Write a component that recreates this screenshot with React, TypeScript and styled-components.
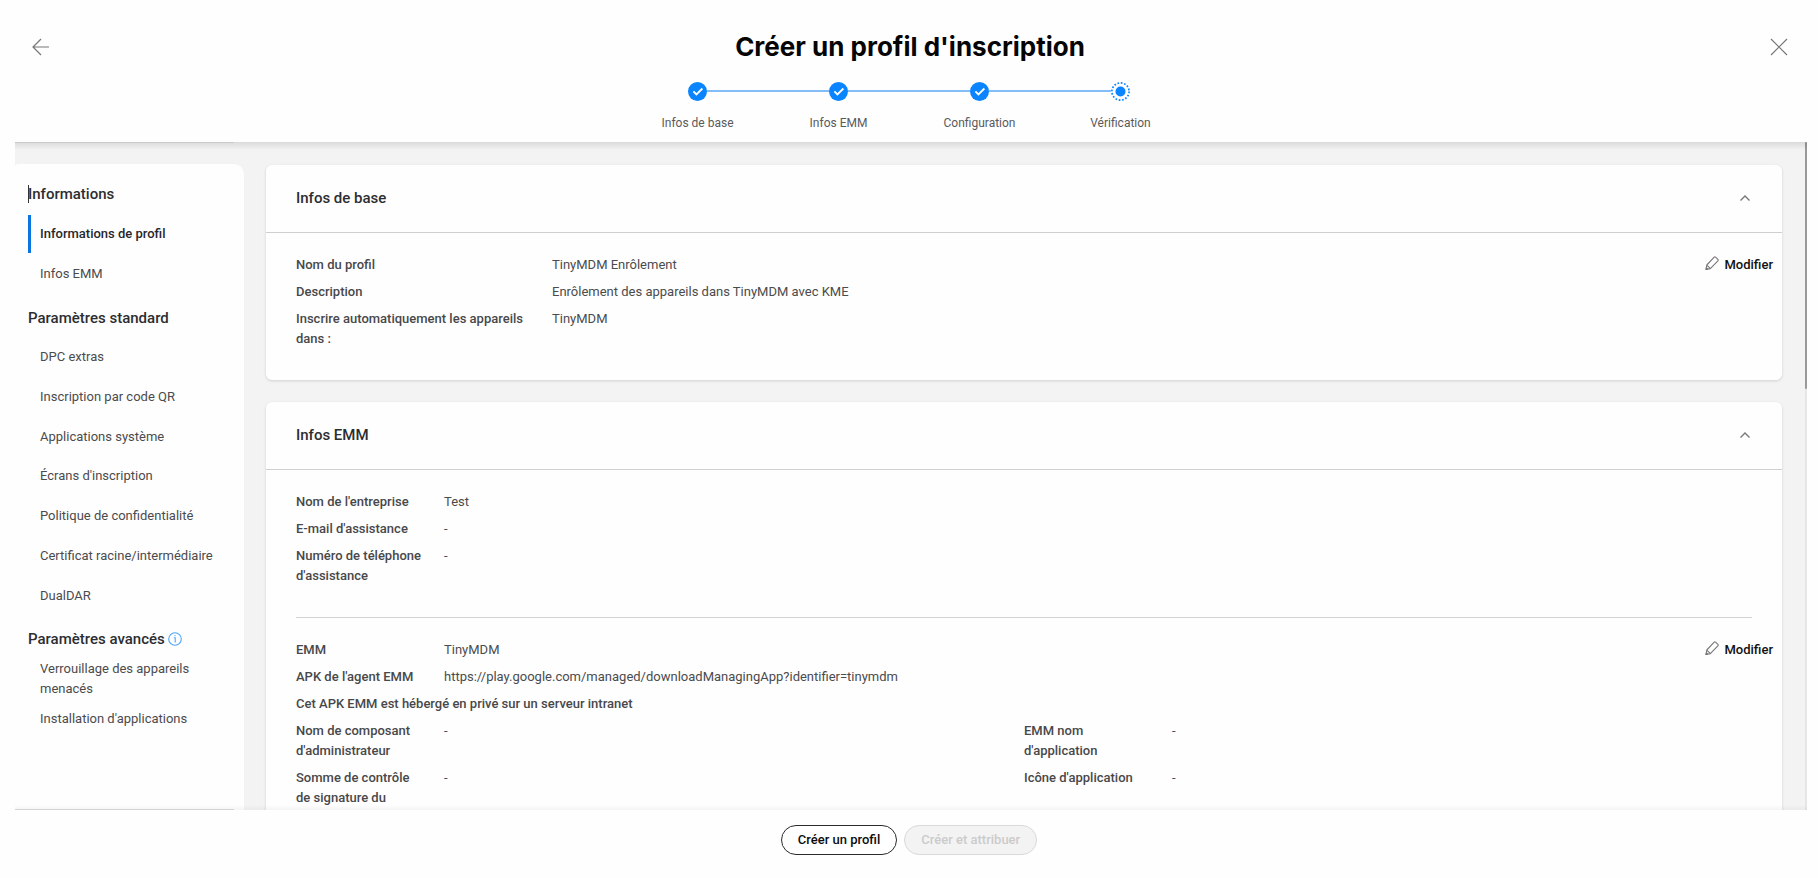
import React from 'react';
import styled, { createGlobalStyle, css } from 'styled-components';

const GlobalStyle = createGlobalStyle`
  * { box-sizing: border-box; }
  body {
    margin: 0;
    background: #fefefe;
    color: #4b4b4d;
    font-family: Roboto, "Liberation Sans", sans-serif;
    font-size: 13px;
    line-height: 20px;
  }
  h1, h2, h3, ol, ul, dl, dd, p { margin: 0; padding: 0; }
  ol, ul { list-style: none; }
  button { font: inherit; cursor: pointer; }
  a { color: inherit; text-decoration: none; }
`;

const Page = styled.div`
  display: flex;
  flex-direction: column;
  height: 100vh;
`;

const Header = styled.header`
  flex: none;
  height: 142px;
  padding: 27px 30px 0;
`;

const TitleRow = styled.div`
  display: flex;
  align-items: center;
  justify-content: space-between;
  height: 40px;
`;

const Title = styled.h1`
  color: #050505;
  font-family: Inter, "Liberation Sans", sans-serif;
  font-size: 26px;
  font-weight: 700;
  line-height: 40px;
`;

const IconButton = styled.button`
  display: flex;
  padding: 0;
  border: 0;
  background: none;
  color: #777;
`;

const Steps = styled.ol`
  display: flex;
  justify-content: center;
  margin-top: 15px;
`;

const StepItem = styled.li`
  position: relative;
  display: flex;
  flex-direction: column;
  align-items: center;
  gap: 12px;
  width: 141px;
  font-size: 12px;
  color: #5a5a5c;

  & + &::before {
    content: '';
    position: absolute;
    top: 8px;
    left: -61px;
    width: 122px;
    height: 2px;
    background: #82bdf8;
  }
`;

const Content = styled.main`
  position: relative;
  display: flex;
  flex: 1;
  min-height: 0;
  margin: 0 11px 0 15px;
  background: #f3f3f3;

  &::before,
  &::after {
    content: '';
    position: absolute;
    left: 0;
    right: 0;
    pointer-events: none;
  }
  &::before {
    top: 0;
    height: 8px;
    background: linear-gradient(rgba(0, 0, 0, 0.1), rgba(0, 0, 0, 0));
  }
  &::after {
    bottom: 0;
    height: 5px;
    background: linear-gradient(rgba(0, 0, 0, 0), rgba(0, 0, 0, 0.04));
  }
`;

const SideColumn = styled.div`
  position: relative;
  flex: none;
  display: flex;
  width: 229px;
  padding-top: 22px;

  &::before,
  &::after {
    content: '';
    position: absolute;
    left: 0;
    width: 219px;
    height: 1px;
  }
  &::before { top: 0; background: #c9c9c9; }
  &::after { bottom: 0; background: #dcdcdc; }
`;

const SideNav = styled.nav`
  flex: 1;
  padding: 6px 13px 0;
  border-radius: 4px 10px 0 0;
  background: #fefefe;
`;

const NavHeading = styled.h2<{ $caret?: boolean }>`
  position: relative;
  display: flex;
  align-items: center;
  gap: 3px;
  padding: 14px 0 10px;
  color: #2c2d31;
  font-size: 15px;
  font-weight: 500;
  line-height: 20px;

  ${(p) => p.$caret && css`
    &::before {
      content: '';
      position: absolute;
      top: 15px;
      left: 0;
      width: 1px;
      height: 18px;
      background: #333;
    }
  `}
`;

const NavList = styled.div`
  display: flex;
  flex-direction: column;
  justify-content: space-between;
  min-height: 277px;
`;

const NavLink = styled.a<{ $active?: boolean; $compact?: boolean; $dense?: boolean }>`
  display: block;
  padding: ${(p) => (p.$compact ? '0 12px 10px' : p.$dense ? '9px 0 9px 12px' : '10px 0 10px 12px')};
  font-size: 13px;

  ${(p) => p.$active && css`
    margin: 1px 0;
    padding: 9px 0 9px 9px;
    border-left: 3px solid #0a74e0;
    color: #27282c;
    font-weight: 500;
  `}
`;

const Panels = styled.div`
  display: flex;
  flex: 1;
  flex-direction: column;
  gap: 22px;
  overflow-y: auto;
  scrollbar-width: none;
  padding: 23px 23px 0 22px;
`;

const ScrollTrack = styled.div`
  flex: none;
  width: 2px;
  background: #e6e6e6;
`;

const ScrollThumb = styled.div`
  height: 37%;
  border-radius: 1px;
  background: #999;
`;

const Card = styled.section`
  flex: none;
  border-radius: 6px;
  background: #fefefe;
  box-shadow: 0 1px 3px rgba(0, 0, 0, 0.14);
`;

const CardHead = styled.div`
  display: flex;
  align-items: center;
  justify-content: space-between;
  padding: 23px 31px 24px 30px;
  border-bottom: 1px solid #cfcfcf;
`;

const CardTitle = styled.h2`
  color: #2c2d31;
  font-size: 15px;
  font-weight: 500;
  line-height: 20px;
`;

const Block = styled.div`
  margin: 0 30px;
  padding: 22px 0 31px;

  & + & { border-top: 1px solid #d3d3d3; }
`;

const BlockRow = styled.div`
  display: flex;
  align-items: flex-start;
  justify-content: space-between;
`;

const Fields = styled.dl<{ $columns?: number }>`
  display: grid;
  flex: 1;
  grid-template-columns: repeat(${(p) => p.$columns ?? 1}, 1fr);
  row-gap: 7px;
`;

const Field = styled.div<{ $label: number }>`
  display: grid;
  grid-template-columns: ${(p) => p.$label}px 1fr;
  column-gap: 20px;

  dt { color: #48484a; font-weight: 500; }
`;

const Note = styled.p`
  margin: 7px 0;
  color: #48484a;
  font-weight: 500;
`;

const EditButton = styled.button`
  display: flex;
  gap: 5px;
  margin-right: -21px;
  padding: 0;
  border: 0;
  background: none;
  color: #111;
  font-weight: 500;
`;

const Footer = styled.footer`
  display: flex;
  flex: none;
  justify-content: center;
  gap: 7px;
  height: 68px;
  padding-top: 15px;
`;

const PillButton = styled.button`
  height: 30px;
  padding: 0 16px;
  border: 1px solid #2a2a2a;
  border-radius: 15px;
  background: #fff;
  color: #0c0c0c;
  font-weight: 500;

  &:disabled {
    border-color: #d9d9d9;
    background: #f3f3f3;
    color: #cbcbcb;
    cursor: default;
  }
`;

const BackIcon = () => (
  <svg width="20" height="20" viewBox="0 0 20 20" fill="none" stroke="currentColor" strokeWidth="1.2">
    <path d="M19 10H3M11 2L3 10L11 18" />
  </svg>
);

const CloseIcon = () => (
  <svg width="18" height="18" viewBox="0 0 18 18" fill="none" stroke="currentColor" strokeWidth="1.2">
    <path d="M1 1L17 17M17 1L1 17" />
  </svg>
);

const ChevronIcon = () => (
  <svg width="12" height="12" viewBox="0 0 12 12" fill="none" stroke="currentColor" strokeWidth="1.4">
    <path d="M1.5 8.5L6 4L10.5 8.5" />
  </svg>
);

const PencilIcon = () => (
  <svg width="14" height="16" viewBox="0 0 14 16" fill="none" stroke="#777" strokeWidth="1.1" strokeLinejoin="round">
    <path d="M1 14.5L1.8 10L9.2 2.2Q9.9 1.5 10.6 2.2L12.9 4.4Q13.6 5.1 12.9 5.8L5.3 13.6Z" />
    <path d="M2 10.4L5 13.2M1 14.5L2.6 13.9L1.5 12.8Z" />
  </svg>
);

const InfoIcon = () => (
  <svg width="14" height="14" viewBox="0 0 14 14" fill="none" stroke="#4fa6fb" strokeWidth="1.1">
    <circle cx="7" cy="7" r="6.3" />
    <path d="M5.8 5.8H7.2V10.5M7 3.2V4.3" />
  </svg>
);

const StepIcon = ({ done }: { done: boolean }) => (
  <svg width="19" height="19" viewBox="0 0 19 19" fill="none">
    {done ? (
      <>
        <circle cx="9.5" cy="9.5" r="9.5" fill="#0a84ff" />
        <path d="M5.4 9.4L8.4 12.4L14.4 6.5" stroke="#fff" strokeWidth="1.8" />
      </>
    ) : (
      <>
        <circle cx="9.5" cy="9.5" r="9.5" fill="#fefefe" />
        <circle cx="9.5" cy="9.5" r="8.6" stroke="#0a84ff" strokeWidth="1.7" strokeDasharray="1.7 1.68" />
        <circle cx="9.5" cy="9.5" r="5" fill="#0a84ff" />
      </>
    )}
  </svg>
);

const StepMark = styled.span`
  position: relative;
  z-index: 1;
  display: flex;
`;

const steps = ['Infos de base', 'Infos EMM', 'Configuration', 'Vérification'];
const standard = [
  'DPC extras',
  'Inscription par code QR',
  'Applications système',
  "Écrans d'inscription",
  'Politique de confidentialité',
  'Certificat racine/intermédiaire',
  'DualDAR',
];
const advanced = ['Verrouillage des appareils menacés', "Installation d'applications"];

type Pair = [string, string];
const basics: Pair[] = [
  ['Nom du profil', 'TinyMDM Enrôlement'],
  ['Description', 'Enrôlement des appareils dans TinyMDM avec KME'],
  ['Inscrire automatiquement les appareils dans :', 'TinyMDM'],
];
const company: Pair[] = [
  ["Nom de l'entreprise", 'Test'],
  ["E-mail d'assistance", '-'],
  ["Numéro de téléphone d'assistance", '-'],
];
const emm: Pair[] = [
  ['EMM', 'TinyMDM'],
  ["APK de l'agent EMM", 'https://play.google.com/managed/downloadManagingApp?identifier=tinymdm'],
];
const emmDetails: Pair[] = [
  ["Nom de composant d'administrateur", '-'],
  ["EMM nom d'application", '-'],
  ['Somme de contrôle de signature du', '-'],
  ["Icône d'application", '-'],
];

const FieldList = ({ items, label, columns }: { items: Pair[]; label: number; columns?: number }) => (
  <Fields $columns={columns}>
    {items.map(([name, value]) => (
      <Field key={name} $label={label}>
        <dt>{name}</dt>
        <dd>{value}</dd>
      </Field>
    ))}
  </Fields>
);

const Edit = () => (
  <EditButton type="button">
    <PencilIcon />
    Modifier
  </EditButton>
);

const PanelHead = ({ title }: { title: string }) => (
  <CardHead>
    <CardTitle>{title}</CardTitle>
    <IconButton type="button" aria-label="Réduire"><ChevronIcon /></IconButton>
  </CardHead>
);

export default function App() {
  return (
    <Page>
      <GlobalStyle />
      <Header>
        <TitleRow>
          <IconButton type="button" aria-label="Retour"><BackIcon /></IconButton>
          <Title>Créer un profil d'inscription</Title>
          <IconButton type="button" aria-label="Fermer"><CloseIcon /></IconButton>
        </TitleRow>
        <Steps>
          {steps.map((name, i) => (
            <StepItem key={name}>
              <StepMark><StepIcon done={i < steps.length - 1} /></StepMark>
              {name}
            </StepItem>
          ))}
        </Steps>
      </Header>
      <Content>
        <SideColumn>
          <SideNav>
            <NavHeading $caret>Informations</NavHeading>
            <NavLink href="#profil" $active>Informations de profil</NavLink>
            <NavLink href="#emm">Infos EMM</NavLink>
            <NavHeading>Paramètres standard</NavHeading>
            <NavList>
              {standard.map((name) => <NavLink key={name} href="#standard" $dense>{name}</NavLink>)}
            </NavList>
            <NavHeading>Paramètres avancés <InfoIcon /></NavHeading>
            {advanced.map((name) => <NavLink key={name} href="#avances" $compact>{name}</NavLink>)}
          </SideNav>
        </SideColumn>
        <Panels>
          <Card id="profil">
            <PanelHead title="Infos de base" />
            <Block>
              <BlockRow>
                <FieldList items={basics} label={236} />
                <Edit />
              </BlockRow>
            </Block>
          </Card>
          <Card id="emm">
            <PanelHead title="Infos EMM" />
            <Block>
              <FieldList items={company} label={128} />
            </Block>
            <Block>
              <BlockRow>
                <FieldList items={emm} label={128} />
                <Edit />
              </BlockRow>
              <Note>Cet APK EMM est hébergé en privé sur un serveur intranet</Note>
              <FieldList items={emmDetails} label={128} columns={2} />
            </Block>
          </Card>
        </Panels>
        <ScrollTrack><ScrollThumb /></ScrollTrack>
      </Content>
      <Footer>
        <PillButton type="button">Créer un profil</PillButton>
        <PillButton type="button" disabled>Créer et attribuer</PillButton>
      </Footer>
    </Page>
  );
}
